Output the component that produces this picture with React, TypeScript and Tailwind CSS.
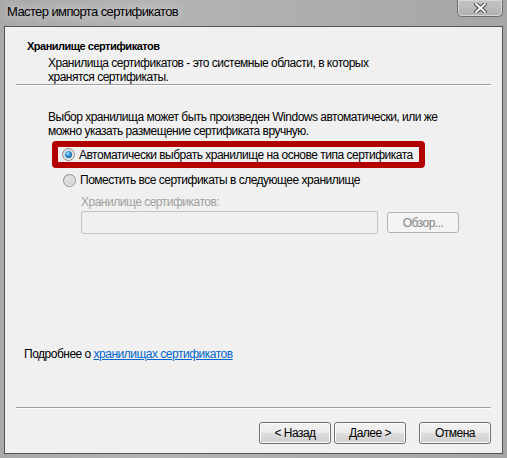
import React from 'react';

const Radio = ({ checked }: { checked?: boolean }) => (
  <div className="w-[13px] h-[13px] rounded-full border border-[#8a8a8a] bg-gradient-to-br from-[#d8d8d8] to-[#f8f8f8] flex items-center justify-center shrink-0">
    <div className="w-[9px] h-[9px] rounded-full bg-gradient-to-br from-[#e6e6e6] to-[#cfcfcf] flex items-center justify-center">
      {checked && (
        <div className="w-[7px] h-[7px] rounded-full bg-[radial-gradient(circle_at_40%_35%,#9fe3ff_0%,#2a8bd6_45%,#0a3d7a_100%)]" />
      )}
    </div>
  </div>
);

const WinButton = ({ children, disabled }: { children: React.ReactNode; disabled?: boolean }) => (
  <button
    className={
      disabled
        ? 'w-[72px] h-[21px] rounded-[3px] border border-[#adb2b5] bg-[#f4f4f4] text-[#838383] text-[12px] leading-none'
        : 'w-[72px] h-[22px] rounded-[3px] border border-[#707070] bg-[linear-gradient(#f2f2f2_0%,#ebebeb_50%,#dddddd_51%,#cfcfcf_100%)] text-black text-[12px] leading-none shadow-[inset_0_0_0_1px_#fcfcfc]'
    }
  >
    {children}
  </button>
);

export default function App() {
  return (
    <div
      className="w-[507px] h-[458px] flex flex-col bg-[linear-gradient(90deg,#a9a9a9_0%,#b4b4b4_30%,#a6a6a6_100%)] px-[4px] pb-[4px]"
      style={{ fontFamily: '"Liberation Sans", Arial, sans-serif' }}
    >
      {/* title bar */}
      <div className="h-[26px] flex items-start justify-between shrink-0">
        <div className="pl-[3px] pt-[3px] text-[13px] tracking-[-0.6px] text-black leading-[18px] [text-shadow:0_0_8px_#e8e8e8] whitespace-nowrap">
          Мастер импорта сертификатов
        </div>
        <div className="w-[46px] h-[17px] rounded-b-[5px] border border-t-0 border-[#6d6d6d] bg-[linear-gradient(#c4c4c4,#b0b0b0)] shadow-[inset_0_0_0_1px_#d6d6d6] flex items-center justify-center">
          <svg width="13" height="10" viewBox="0 0 13 10">
            <path d="M2 1 L11 9 M11 1 L2 9" stroke="#4a4a4a" strokeWidth="4" strokeLinecap="square" />
            <path d="M2 1 L11 9 M11 1 L2 9" stroke="#ffffff" strokeWidth="2" strokeLinecap="square" />
          </svg>
        </div>
      </div>

      {/* client area */}
      <div className="flex-1 flex flex-col border border-[#555] bg-[#f0f0f0] text-[12px] tracking-[-0.5px] text-black leading-[14px] whitespace-nowrap">
        {/* header */}
        <div className="h-[57px] flex flex-col pl-[22px] pt-[12px]">
          <div className="font-bold text-[11px] tracking-[-0.5px] leading-[15px]">Хранилище сертификатов</div>
          <div className="pl-[21px] pt-[2px]">
            Хранилища сертификатов - это системные области, в которых
            <br />
            хранятся сертификаты.
          </div>
        </div>
        <div className="mx-[11px] h-px bg-[#a0a0a0] border-b border-white box-content" />

        {/* body */}
        <div className="flex-1 flex flex-col pl-[43px] pt-[24px]">
          <div>
            Выбор хранилища может быть произведен Windows автоматически, или же
            <br />
            можно указать размещение сертификата вручную.
          </div>
          <div className="mt-[3px] ml-[4px] w-[373px] h-[27px] rounded-[4px] border-[6px] border-[#b30000] flex items-center pl-[4px] gap-[4px]">
            <Radio checked />
            <span>Автоматически выбрать хранилище на основе типа сертификата</span>
          </div>
          <div className="mt-[5px] ml-[15px] flex items-center gap-[4px]">
            <Radio />
            <span>Поместить все сертификаты в следующее хранилище</span>
          </div>
          <div className="mt-[8px] ml-[33px] text-[#a0a0a0]">Хранилище сертификатов:</div>
          <div className="mt-[2px] ml-[33px] flex items-center gap-[9px]">
            <div className="w-[297px] h-[23px] rounded-[2px] border border-[#c5c5c5] bg-[#f0f0f0]" />
            <WinButton disabled>Обзор...</WinButton>
          </div>
          <div className="flex-1" />
          <div className="-ml-[24px] mb-[46px]">
            Подробнее о{' '}
            <span className="text-[#0066cc] underline">хранилищах сертификатов</span>
          </div>
        </div>

        <div className="mx-[11px] h-px bg-[#a0a0a0] border-b border-white box-content" />
        {/* footer */}
        <div className="h-[44px] flex items-start justify-end pt-[13px] pr-[11px]">
          <WinButton>&lt; Назад</WinButton>
          <div className="w-[3px]" />
          <WinButton>Далее &gt;</WinButton>
          <div className="w-[13px]" />
          <WinButton>Отмена</WinButton>
        </div>
      </div>
    </div>
  );
}
